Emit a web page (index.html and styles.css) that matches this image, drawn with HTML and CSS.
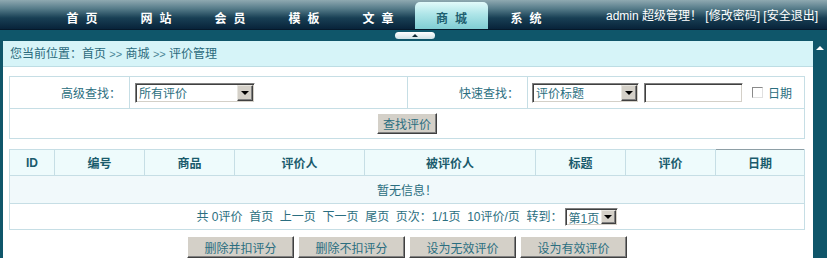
FILE: index.html
```html
<!DOCTYPE html>
<html lang="zh-CN">
<head>
    <meta charset="UTF-8">
    <meta name="viewport" content="width=device-width, initial-scale=1.0">
    <title>评价管理</title>
    <link rel="stylesheet" href="styles.css">
</head>
<body>
    <div class="topbar">
        <div class="nav">
            <a href="#">首页</a>
            <a href="#">网站</a>
            <a href="#">会员</a>
            <a href="#">模板</a>
            <a href="#">文章</a>
            <a href="#" class="active">商城</a>
            <a href="#">系统</a>
        </div>
        <div class="userinfo">admin 超级管理！ <a href="#">[修改密码]</a> <a href="#">[安全退出]</a></div>
    </div>
    <div class="subbar"><span class="toggle"></span></div>

    <div class="frame">
        <div class="main">
            <div class="position">您当前位置：首页 <span class="sep">&gt;&gt;</span> 商城 <span class="sep">&gt;&gt;</span> 评价管理</div>
            <div class="content">
                <!-- search -->
                <table class="search">
                    <colgroup>
                        <col style="width:120px">
                        <col style="width:278px">
                        <col style="width:120px">
                        <col>
                    </colgroup>
                    <tr class="row-fields">
                        <td class="label">高级查找：</td>
                        <td>
                            <div class="fields">
                                <span class="combo combo-all">所有评价<span class="drop"></span></span>
                            </div>
                        </td>
                        <td class="label">快速查找：</td>
                        <td>
                            <div class="fields">
                                <span class="combo combo-title">评价标题<span class="drop"></span></span>
                                <span class="textbox"></span>
                                <span class="check"></span>
                                <span class="check-label">日期</span>
                            </div>
                        </td>
                    </tr>
                    <tr class="row-submit">
                        <td colspan="4"><button class="btn btn-find">查找评价</button></td>
                    </tr>
                </table>

                <!-- list -->
                <table class="list">
                    <colgroup>
                        <col style="width:45px">
                        <col style="width:90px">
                        <col style="width:90px">
                        <col style="width:130px">
                        <col style="width:171px">
                        <col style="width:90px">
                        <col style="width:90px">
                        <col>
                    </colgroup>
                    <thead>
                        <tr>
                            <th>ID</th>
                            <th>编号</th>
                            <th>商品</th>
                            <th>评价人</th>
                            <th>被评价人</th>
                            <th>标题</th>
                            <th>评价</th>
                            <th class="cur">日期</th>
                        </tr>
                    </thead>
                    <tbody>
                        <tr class="empty">
                            <td colspan="8">暂无信息！</td>
                        </tr>
                        <tr class="pager">
                            <td colspan="8">
                                共 0评价&nbsp; 首页&nbsp; 上一页&nbsp; 下一页&nbsp; 尾页&nbsp; 页次：1/1页&nbsp; 10评价/页&nbsp; 转到：<span class="combo combo-page">第1页<span class="drop"></span></span>
                            </td>
                        </tr>
                    </tbody>
                </table>

                <div class="actions">
                    <button class="btn">删除并扣评分</button>
                    <button class="btn">删除不扣评分</button>
                    <button class="btn">设为无效评价</button>
                    <button class="btn">设为有效评价</button>
                </div>
            </div>
        </div>
        <div class="scroll"><span class="up"></span></div>
    </div>
</body>
</html>
```

FILE: styles.css
```css
* {
    box-sizing: border-box;
}
html, body {
    height: 100%;
}
body {
    margin: 0;
    display: flex;
    flex-direction: column;
    overflow: hidden;
    background: #0f566a;
    font-family: "Liberation Sans", "Noto Sans CJK SC", sans-serif;
    font-size: 12px;
    color: #2b6e80;
}
a {
    color: inherit;
    text-decoration: none;
}

/* top navigation */
.topbar {
    height: 30px;
    display: flex;
    justify-content: space-between;
    background: linear-gradient(#8fa9b1, #557b89 30%, #183f54 62%, #08233a);
    border-bottom: 1px solid #06192b;
}
.nav {
    display: flex;
    align-items: flex-end;
    padding-left: 45px;
}
.nav a {
    width: 74px;
    height: 27px;
    padding-top: 10px;
    line-height: 14px;
    text-align: center;
    color: #fff;
    font-weight: bold;
    letter-spacing: 7px;
    text-indent: 7px;
}
.nav a.active {
    width: 73px;
    margin-right: 1px;
    color: #1e5f70;
    background: linear-gradient(#e2fafa, #aee5e8 45%, #80cdd3);
    border-radius: 5px 5px 0 0;
}
.userinfo {
    padding: 9px 9px 0 0;
    line-height: 14px;
    color: #fff;
}

.subbar {
    height: 11px;
    display: flex;
    justify-content: center;
    background: #0f566a;
}
.toggle {
    width: 40px;
    height: 7px;
    margin-top: 2px;
    margin-left: 2px;
    display: flex;
    align-items: center;
    justify-content: center;
    border-radius: 4px;
    background: linear-gradient(#ffffff, #cfe2e6);
}
.toggle::after {
    content: "";
    border-left: 3px solid transparent;
    border-right: 3px solid transparent;
    border-bottom: 3px solid #102a36;
}

/* frame */
.frame {
    flex: 1;
    display: flex;
    padding-left: 3px;
    min-height: 0;
}
.main {
    flex: 1;
    background: #fff;
}
.scroll {
    width: 14px;
    padding-top: 5px;
    display: flex;
    justify-content: center;
    align-items: flex-start;
}
.scroll .up {
    border-left: 4px solid transparent;
    border-right: 4px solid transparent;
    border-bottom: 4px solid #fff;
}

.position {
    height: 26px;
    line-height: 26px;
    padding-left: 7px;
    background: #d6f4f8;
    border-bottom: 1px solid #bddde4;
    color: #2a6a7c;
}
.position .sep {
    font-size: 11px;
    color: #4a8596;
}
.content {
    padding: 9px 8px 0 6px;
}

/* tables */
table {
    width: 100%;
    border-collapse: collapse;
    table-layout: fixed;
}
td, th {
    border: 1px solid #c6dee5;
    padding: 0;
    font-size: 12px;
}
.search .row-fields td {
    height: 32px;
}
.search .row-submit td {
    height: 30px;
    text-align: center;
}
.search .label {
    text-align: right;
    padding-right: 8px;
}
.fields {
    display: flex;
    align-items: center;
    padding-left: 4px;
}

.combo {
    display: inline-flex;
    align-items: center;
    justify-content: space-between;
    height: 20px;
    padding: 0 1px 0 3px;
    background: #fff;
    border: 1px solid;
    border-color: #808080 #fff #fff #808080;
    box-shadow: inset 1px 1px 0 #404040, inset -1px -1px 0 #d4d0c8;
    color: #2b6e80;
    vertical-align: middle;
}
.combo .drop {
    width: 16px;
    height: 16px;
    display: flex;
    align-items: center;
    justify-content: center;
    background: #d4d0c8;
    border: 1px solid;
    border-color: #e8e6e0 #404040 #404040 #e8e6e0;
    box-shadow: inset -1px -1px 0 #808080;
}
.combo .drop::after {
    content: "";
    border-left: 4px solid transparent;
    border-right: 4px solid transparent;
    border-top: 4px solid #000;
}
.combo-all {
    width: 120px;
    margin-left: 1px;
}
.combo-title {
    width: 107px;
}
.combo-page {
    width: 53px;
    height: 18px;
    margin-left: 2px;
}
.combo-page .drop {
    width: 15px;
    height: 14px;
}
.textbox {
    width: 99px;
    height: 20px;
    margin-left: 5px;
    background: #fff;
    border: 1px solid;
    border-color: #808080 #fff #fff #808080;
    box-shadow: inset 1px 1px 0 #404040, inset -1px -1px 0 #d4d0c8;
}
.check {
    width: 11px;
    height: 11px;
    margin-left: 9px;
    background: #fff;
    border: 1px solid;
    border-color: #8a8a8a #e0e0e0 #e0e0e0 #8a8a8a;
}
.check-label {
    margin-left: 5px;
}

.list {
    margin-top: 10px;
}
.list th {
    height: 26px;
    background: #eefbfc;
    color: #1a5b6c;
    font-weight: bold;
}
.list th.cur {
    border-top-color: #8e9fa6;
}
.list .empty td {
    height: 28px;
    text-align: center;
    background: #f1f9fb;
}
.list .pager td {
    height: 26px;
    text-align: center;
    background: #fff;
}

/* buttons */
.btn {
    height: 22px;
    padding: 0;
    font-family: inherit;
    font-size: 12px;
    color: #2b6e80;
    background: #d4d0c8;
    border: 1px solid;
    border-color: #fff #404040 #404040 #fff;
    box-shadow: inset -1px -1px 0 #808080;
    cursor: pointer;
}
.btn-find {
    width: 60px;
    height: 21px;
}
.actions {
    display: flex;
    justify-content: center;
    gap: 4px;
    margin-top: 6px;
}
.actions .btn {
    width: 107px;
}
```
